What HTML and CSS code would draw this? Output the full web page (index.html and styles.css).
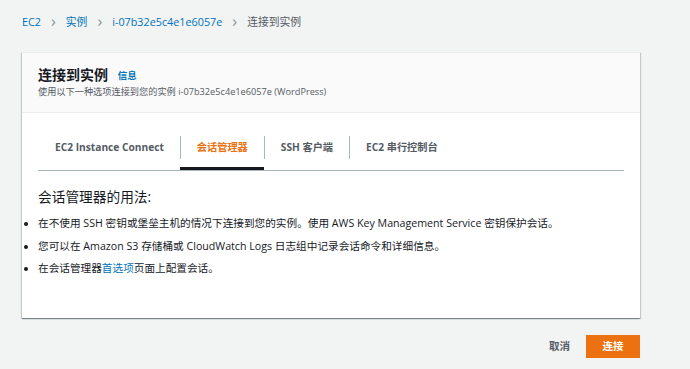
FILE: index.html
```html
<!DOCTYPE html>
<html>

<head>
  <title>连接到实例</title>
  <meta charset="utf-8">
  <link rel="stylesheet" href="styles.css">
</head>

<body>
  <div id="crumbs">
    <a class="crumb">EC2</a>
    <span class="sep">&#x203A;</span>
    <a class="crumb">实例</a>
    <span class="sep">&#x203A;</span>
    <a class="crumb">i-07b32e5c4e1e6057e</a>
    <span class="sep">&#x203A;</span>
    <span class="crumb current">连接到实例</span>
  </div>

  <div id="card">
    <div id="card-head">
      <div id="title">连接到实例 <a class="info">信息</a></div>
      <div id="subtitle">使用以下一种选项连接到您的实例 i-07b32e5c4e1e6057e (WordPress)</div>
    </div>

    <div id="card-body">
      <div id="tabs">
        <div class="tab"><span class="tab-label">EC2 Instance Connect</span></div>
        <div class="tab active"><span class="tab-label">会话管理器</span></div>
        <div class="tab"><span class="tab-label">SSH 客户端</span></div>
        <div class="tab"><span class="tab-label">EC2 串行控制台</span></div>
      </div>

      <div id="usage">
        <div id="usage-title">会话管理器的用法:</div>
        <ul>
          <li>在不使用 SSH 密钥或堡垒主机的情况下连接到您的实例。使用 AWS Key Management Service 密钥保护会话。</li>
          <li>您可以在 Amazon S3 存储桶或 CloudWatch Logs 日志组中记录会话命令和详细信息。</li>
          <li>在会话管理器<a class="link">首选项</a>页面上配置会话。</li>
        </ul>
      </div>
    </div>
  </div>

  <div id="actions">
    <div class="btn cancel">取消</div>
    <div class="btn primary">连接</div>
  </div>
</body>

</html>
```

FILE: styles.css
```css
* {
  font-family: "Open Sans", "Noto Sans CJK SC", sans-serif;
  box-sizing: border-box;
}

body {
  background: #f2f3f3;
  margin: 0;
  padding: 0 50px 0 22px;
  color: #16191f;
}

a {
  cursor: pointer;
}

#crumbs {
  display: flex;
  align-items: flex-start;
  padding-top: 14px;
  height: 52px;
  font-size: 10.8px;
  line-height: 16px;
}

.crumb {
  color: #0073bb;
}

.crumb.current {
  color: #545b64;
}

.sep {
  color: #879596;
  font-size: 16px;
  margin: 0 10px;
  line-height: 15px;
}

#card {
  background: white;
  box-shadow: 0 1px 1px 0 rgba(0, 28, 36, .3), 1px 1px 1px 0 rgba(0, 28, 36, .15), -1px 1px 1px 0 rgba(0, 28, 36, .15);
  border-top: 1px solid #eaeded;
}

#card-head {
  background: #fafafa;
  border-bottom: 1px solid #eaeded;
  padding: 12px 16px 13px;
}

#title {
  font-size: 14px;
  font-weight: bold;
  line-height: 19px;
}

.info {
  font-size: 9.5px;
  color: #0073bb;
  margin-left: 6px;
  vertical-align: 1px;
}

#subtitle {
  font-size: 9.2px;
  color: #545b64;
  line-height: 14px;
}

#card-body {
  padding: 15px 16px 35px 16px;
}

#tabs {
  display: flex;
  border-bottom: 1px solid #aab7b8;
}

.tab {
  padding: 8px 0 8px;
  border-bottom: 3px solid transparent;
  font-size: 10.2px;
  font-weight: bold;
  color: #545b64;
}

.tab-label {
  display: block;
  line-height: 23px;
  padding: 0 16px 0 17px;
}

.tab + .tab .tab-label {
  border-left: 1px solid #aab7b8;
  padding-left: 16px;
}

.tab.active {
  border-bottom-color: #16191f;
  color: #ec7211;
}

#usage-title {
  font-size: 13.7px;
  line-height: 18px;
  margin-top: 17px;
}

ul {
  margin: 9px 0 0;
  padding-left: 0;
  list-style: disc outside;
}

li {
  font-size: 10.65px;
  line-height: 16px;
  margin-bottom: 6.5px;
}

.link {
  color: #0073bb;
}

#actions {
  display: flex;
  justify-content: flex-end;
  align-items: center;
  gap: 16px;
  margin-top: 17px;
}

.btn {
  font-size: 10.5px;
  font-weight: bold;
  line-height: 23px;
  cursor: pointer;
}

.cancel {
  color: #545b64;
}

.primary {
  background: #ec7211;
  color: white;
  width: 54px;
  text-align: center;
}
```
